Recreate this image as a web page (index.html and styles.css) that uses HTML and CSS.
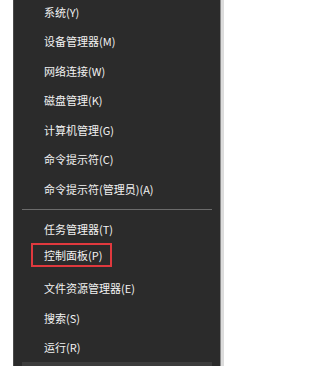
FILE: index.html
```html
<!DOCTYPE html>
<html lang="zh-CN">
<head>
<meta charset="utf-8">
<link rel="stylesheet" href="styles.css">
</head>
<body>
<div class="page">
  <div class="menu">
    <ul class="list">
      <li class="item">系统(Y)</li>
      <li class="item">设备管理器(M)</li>
      <li class="item">网络连接(W)</li>
      <li class="item">磁盘管理(K)</li>
      <li class="item">计算机管理(G)</li>
      <li class="item">命令提示符(C)</li>
      <li class="item">命令提示符(管理员)(A)</li>
      <li class="sep"></li>
      <li class="item">任务管理器(T)</li>
      <li class="item"><span class="mark">控制面板(P)</span></li>
      <li class="item">文件资源管理器(E)</li>
      <li class="item">搜索(S)</li>
      <li class="item">运行(R)</li>
      <li class="item hover"></li>
    </ul>
  </div>
  <div class="rest"></div>
</div>
</body>
</html>
```
FILE: styles.css
```css
html, body {
  margin: 0;
  padding: 0;
  background: #ffffff;
  width: 224px;
  height: 366px;
  overflow: hidden;
}
.page {
  display: flex;
  height: 366px;
  padding-left: 13px;
  box-sizing: border-box;
}
.menu {
  width: 208px;
  height: 100%;
  background: #2b2b2b;
  border-left: 1px solid #4b4b4b;
  border-right: 1px solid #8a8a8a;
  box-sizing: border-box;
  overflow: hidden;
}
.rest {
  flex: 1;
  background: #dcdcdc;
}
.list {
  list-style: none;
  margin: -3px 0 0 0;
  padding: 0 8px 0 8px;
  font-family: "Noto Sans CJK SC", "Microsoft YaHei", sans-serif;
  font-size: 11px;
  color: #f2f2f2;
}
.item {
  height: 29.5px;
  display: flex;
  align-items: center;
  padding-left: 22px;
}
.sep {
  height: 1px;
  background: #6b6b6b;
  margin: 5px 0;
}
.hover {
  background: #3c3c3c;
}
.mark {
  display: inline-block;
  border: 2px solid #e0393e;
  margin-left: -13px;
  margin-bottom: 8px;
  padding: 0 8px 0 11px;
  line-height: 20px;
}
```
